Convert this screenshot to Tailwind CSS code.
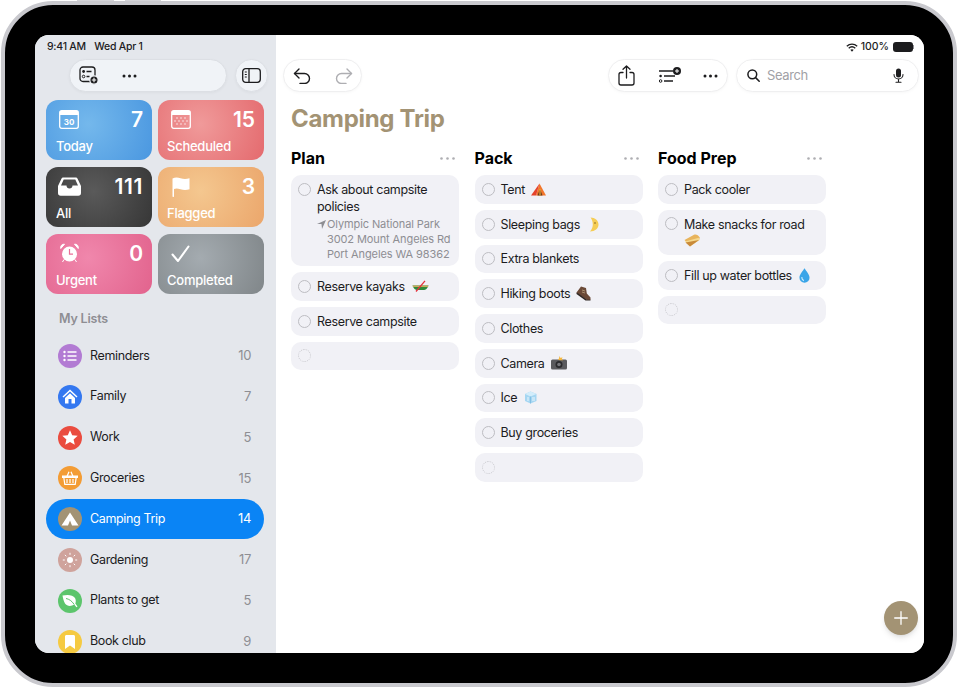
<!DOCTYPE html>
<html lang="en">
<head>
<meta charset="UTF-8">
<title>Reminders - Camping Trip</title>
<script src="https://cdn.jsdelivr.net/npm/@tailwindcss/browser@4"></script>
</head>
<body class="bg-white font-['Inter',sans-serif] text-[#1c1c1e]">
<div class="relative w-[958px] h-[689px] overflow-hidden p-[1px]">
  <!-- hardware buttons -->
  <div class="absolute top-0 left-[77px] w-[37px] h-[3px] bg-[#d4d4d8]"></div>
  <div class="absolute top-0 left-[125px] w-[36px] h-[3px] bg-[#d4d4d8]"></div>

  <div class="relative w-[956px] h-[686px] rounded-[52px] border-[4px] border-[#c9c9ce] bg-black pt-[30px] pl-[30px]">
    <div class="flex w-[889px] h-[618px] rounded-[14px] overflow-hidden bg-white">

      <!-- sidebar -->
      <aside class="w-[241px] h-full shrink-0 bg-[#e4e7ec] overflow-hidden">
        <div class="h-[24px] flex items-center pl-[12px] text-[10.5px] tracking-[-0.25px] font-medium text-[#1c1c1e] gap-[8.500px]">
          <span>9:41 AM</span><span>Wed Apr 1</span>
        </div>
        <div class="flex gap-[8px] ml-[34px] h-[33px]">
          <div class="w-[158px] rounded-full bg-[#f0f3f7] border border-[#dcdfe4] shadow-[0_1px_3px_rgba(0,0,0,0.04)] flex items-center pl-[9px] gap-[23px]">
            <svg width="20" height="19" viewBox="0 0 20 19" fill="none" stroke="#1c1c1e" stroke-width="1.3"><rect x="1" y="1" width="15" height="14.5" rx="3"/><circle cx="4.6" cy="5.5" r="1.4" fill="#1c1c1e" stroke="none"/><circle cx="4.6" cy="10.5" r="1.3" stroke-width="1"/><path d="M7.5 5.5h5M7.5 10.5h3"/><circle cx="15" cy="14" r="4.2" fill="#1c1c1e" stroke="#f0f3f7"/><path d="M15 11.8v4.4M12.8 14h4.4" stroke="#fff" stroke-width="1.1"/></svg>
            <svg width="15" height="4" viewBox="0 0 15 4" fill="#1c1c1e"><circle cx="2" cy="2" r="1.5"/><circle cx="7.5" cy="2" r="1.5"/><circle cx="13" cy="2" r="1.5"/></svg>
          </div>
          <div class="w-[33px] rounded-full bg-[#f0f3f7] border border-[#dcdfe4] shadow-[0_1px_3px_rgba(0,0,0,0.04)] flex items-center justify-center">
            <svg width="19" height="15" viewBox="0 0 19 15" fill="none" stroke="#1c1c1e" stroke-width="1.3"><rect x="0.7" y="0.7" width="17.6" height="13.6" rx="3"/><path d="M7 1v13"/><path d="M2.8 4h2M2.8 6.5h2M2.8 9h2" stroke-width="1.1"/></svg>
          </div>
        </div>

        <div class="grid grid-cols-[106px_106px] gap-x-[6px] gap-y-[7px] ml-[11px] mt-[8px]">
          <div class="h-[60px] rounded-[12px] bg-[radial-gradient(circle_at_40%_40%,#74b8ec,#4a97e0)] text-white flex flex-col justify-between pl-[10px] pr-[9px] pt-[9px] pb-[6px]">
            <div class="flex justify-between items-start h-[22px]">
              <svg class="ml-[3px] mt-[1px]" width="20" height="19" viewBox="0 0 20 19" fill="none"><rect x="0.7" y="0.7" width="18.6" height="17.6" rx="2" stroke="#fff" stroke-width="1.3"/><path d="M1 1h18v4H1z" fill="#fff"/><text x="10" y="15" text-anchor="middle" font-size="8" font-weight="700" fill="#fff">30</text></svg>
              <span class="text-[21px] leading-[22px] font-semibold">7</span>
            </div>
            <span class="text-[13px] leading-[16px] font-medium tracking-[-0.25px]">Today</span>
          </div>
          <div class="h-[60px] rounded-[12px] bg-[radial-gradient(circle_at_40%_40%,#f09a9a,#e46a6e)] text-white flex flex-col justify-between pl-[9px] pr-[9px] pt-[9px] pb-[6px]">
            <div class="flex justify-between items-start h-[22px]">
              <svg class="ml-[4px] mt-[1px]" width="20" height="19" viewBox="0 0 20 19" fill="none"><rect x="0.7" y="0.7" width="18.6" height="17.6" rx="2" stroke="#fff" stroke-width="1.3"/><path d="M1 1h18v4H1z" fill="#fff"/><g fill="#fff"><circle cx="6" cy="8" r=".7"/><circle cx="10" cy="8" r=".7"/><circle cx="14" cy="8" r=".7"/><circle cx="4" cy="11" r=".7"/><circle cx="8" cy="11" r=".7"/><circle cx="12" cy="11" r=".7"/><circle cx="16" cy="11" r=".7"/><circle cx="6" cy="14" r=".7"/><circle cx="10" cy="14" r=".7"/><circle cx="14" cy="14" r=".7"/></g></svg>
              <span class="text-[21px] leading-[22px] font-semibold">15</span>
            </div>
            <span class="text-[13px] leading-[16px] font-medium tracking-[-0.25px]">Scheduled</span>
          </div>
          <div class="h-[60px] rounded-[12px] bg-[radial-gradient(circle_at_45%_40%,#5a5a5a,#363636)] text-white flex flex-col justify-between pl-[10px] pr-[9px] pt-[9px] pb-[6px]">
            <div class="flex justify-between items-start h-[22px]">
              <svg class="ml-[2px] mt-[1px]" width="23" height="19" viewBox="0 0 23 19" fill="#fff"><path d="M5.5 0.5h12c1 0 1.7.4 2.2 1.4L23 9v7c0 1.7-1 2.7-2.7 2.7H2.7C1 18.700 0 17.700 0 16V9l3.300-7.100C3.800.9 4.500.5 5.500.5zM5.700 2.500 3 8.500h5.500c0 1.700 1.300 3 3 3s3-1.300 3-3H20l-2.700-6z"/></svg>
              <span class="text-[21px] leading-[22px] font-semibold tracking-[0.6px]">111</span>
            </div>
            <span class="text-[13px] leading-[16px] font-medium tracking-[-0.25px]">All</span>
          </div>
          <div class="h-[60px] rounded-[12px] bg-[radial-gradient(circle_at_40%_40%,#f4c78f,#eba66b)] text-white flex flex-col justify-between pl-[9px] pr-[9px] pt-[9px] pb-[6px]">
            <div class="flex justify-between items-start h-[22px]">
              <svg class="ml-[5px] mt-[1px]" width="18" height="20" viewBox="0 0 18 20" fill="#fff"><path d="M0.500 1.500C3 .2 5.500.2 8.500 1.200s6 1 9 0v11c-3 1-6 1-9 0s-4.500-1-6.500-.3V19.500a.8.8 0 0 1-1.500 0z"/></svg>
              <span class="text-[21px] leading-[22px] font-semibold">3</span>
            </div>
            <span class="text-[13px] leading-[16px] font-medium tracking-[-0.25px]">Flagged</span>
          </div>
          <div class="h-[60px] rounded-[12px] bg-[radial-gradient(circle_at_40%_40%,#f087ac,#e2638d)] text-white flex flex-col justify-between pl-[10px] pr-[9px] pt-[9px] pb-[6px]">
            <div class="flex justify-between items-start h-[22px]">
              <svg class="ml-[4px]" width="19" height="20" viewBox="0 0 19 20" fill="#fff"><circle cx="9.500" cy="11" r="7.500"/><path d="M0.800 5.500C.2 3 2 .8 4.500 1.200zM18.200 5.500c.6-2.500-1.200-4.700-3.700-4.300zM4 16.500 2.500 19M15 16.500l1.500 2.500" stroke="#fff"/><path d="M9.500 6v5.200h3.500" fill="none" stroke="#e96f98" stroke-width="1.200"/></svg>
              <span class="text-[21px] leading-[22px] font-semibold">0</span>
            </div>
            <span class="text-[13px] leading-[16px] font-medium tracking-[-0.25px]">Urgent</span>
          </div>
          <div class="h-[60px] rounded-[12px] bg-[radial-gradient(circle_at_40%_40%,#a4abb0,#808689)] text-white flex flex-col justify-between pl-[9px] pr-[9px] pt-[9px] pb-[6px]">
            <div class="flex justify-between items-start h-[22px]">
              <svg class="ml-[4px] mt-[2px]" width="19" height="18" viewBox="0 0 19 18" fill="none" stroke="#fff" stroke-width="2.100" stroke-linecap="round" stroke-linejoin="round"><path d="M1.500 9.500 7 16 17.500 1.500"/></svg>
            </div>
            <span class="text-[13px] leading-[16px] font-medium tracking-[-0.25px]">Completed</span>
          </div>
        </div>

        <div class="pl-[24px] pt-[17px] pb-[9px] text-[12.5px] tracking-[-0.2px] leading-[16px] font-semibold text-[#8e8e93]">My Lists</div>

        <div class="ml-[11px] mr-[12px] flex flex-col gap-[0.800px] tracking-[-0.35px]">
          <div class="h-[40px] flex items-center pl-[12px] pr-[13px] rounded-full text-[12.5px]">
            <span class="w-[24px] h-[24px] rounded-full bg-[#b27bd3] flex items-center justify-center">
              <svg width="14" height="12" viewBox="0 0 14 12" fill="#fff"><circle cx="1.500" cy="2" r="1.200"/><circle cx="1.500" cy="6" r="1.200"/><circle cx="1.500" cy="10" r="1.200"/><path d="M4.500 1.200h9v1.600h-9zM4.500 5.200h9v1.600h-9zM4.500 9.200h9v1.600h-9z"/></svg>
            </span>
            <span class="ml-[8px] flex-1">Reminders</span><span class="text-[#8e8e93] text-[13px]">10</span>
          </div>
          <div class="h-[40px] flex items-center pl-[12px] pr-[13px] rounded-full text-[12.5px]">
            <span class="w-[24px] h-[24px] rounded-full bg-[#3478f0] flex items-center justify-center">
              <svg width="16" height="15" viewBox="0 0 16 15" fill="#fff"><path d="M8 0.500 0.500 7.500l1 1.100L8 2.600l6.500 6 1-1.100z"/><path d="M3 9 8 4.300 13 9v5.500H9.500V10h-3v4.500H3z"/></svg>
            </span>
            <span class="ml-[8px] flex-1">Family</span><span class="text-[#8e8e93] text-[13px]">7</span>
          </div>
          <div class="h-[40px] flex items-center pl-[12px] pr-[13px] rounded-full text-[12.5px]">
            <span class="w-[24px] h-[24px] rounded-full bg-[#ea4c3f] flex items-center justify-center">
              <svg width="16" height="15" viewBox="0 0 16 15" fill="#fff"><path d="M8 0.300 10.200 5.300l5.500.5-4.100 3.600 1.200 5.300L8 11.900l-4.800 2.800 1.200-5.300L.3 5.800l5.500-.5z"/></svg>
            </span>
            <span class="ml-[8px] flex-1">Work</span><span class="text-[#8e8e93] text-[13px]">5</span>
          </div>
          <div class="h-[40px] flex items-center pl-[12px] pr-[13px] rounded-full text-[12.5px]">
            <span class="w-[24px] h-[24px] rounded-full bg-[#f39c34] flex items-center justify-center">
              <svg width="16" height="14" viewBox="0 0 16 14" fill="none" stroke="#fff" stroke-width="1.200"><path d="M5 5.500 7 .8M11 5.500 9 .8"/><path d="M.5 5.200h15v1.300h-15z" fill="#fff"/><path d="M1.800 6.500l1 6.800h10.400l1-6.800M5 8v4M8 8v4M11 8v4"/></svg>
            </span>
            <span class="ml-[8px] flex-1">Groceries</span><span class="text-[#8e8e93] text-[13px]">15</span>
          </div>
          <div class="h-[40px] flex items-center pl-[12px] pr-[13px] rounded-full text-[12.5px] bg-[#0a84f5] text-white">
            <span class="w-[24px] h-[24px] rounded-full bg-[#a39374] flex items-center justify-center">
              <svg width="18" height="14" viewBox="0 0 18 14" fill="#fff"><path d="M9 0.500 17.500 13.500H11L9 8.500 7 13.500H.5z"/></svg>
            </span>
            <span class="ml-[8px] flex-1">Camping Trip</span><span class="text-[13px]">14</span>
          </div>
          <div class="h-[40px] flex items-center pl-[12px] pr-[13px] rounded-full text-[12.5px]">
            <span class="w-[24px] h-[24px] rounded-full bg-[#cfa39c] flex items-center justify-center">
              <svg width="16" height="16" viewBox="0 0 16 16" fill="#fff" stroke="#fff"><circle cx="8" cy="8" r="3" stroke="none"/><path d="M8 .8v2M8 13.200v2M.8 8h2M13.200 8h2M2.900 2.900l1.400 1.400M11.700 11.700l1.400 1.400M2.900 13.100l1.400-1.400M11.700 4.300l1.400-1.400" fill="none"/></svg>
            </span>
            <span class="ml-[8px] flex-1">Gardening</span><span class="text-[#8e8e93] text-[13px]">17</span>
          </div>
          <div class="h-[40px] flex items-center pl-[12px] pr-[13px] rounded-full text-[12.5px]">
            <span class="w-[24px] h-[24px] rounded-full bg-[#5cc56c] flex items-center justify-center">
              <svg width="16" height="14" viewBox="0 0 16 14" fill="#fff"><path d="M0.500 1.500C5 .5 11 .5 13 4c1 1.800 1 4 .3 5.500l2.200 3-1 .8-2.300-2.800C9.500 12.500 5 12.500 3 9.500 1.500 7 1 4 .5 1.500z"/><path d="M4 4.500c3 .5 6 2.500 8.200 6" fill="none" stroke="#5cc56c"/></svg>
            </span>
            <span class="ml-[8px] flex-1">Plants to get</span><span class="text-[#8e8e93] text-[13px]">5</span>
          </div>
          <div class="h-[40px] flex items-center pl-[12px] pr-[13px] rounded-full text-[12.5px]">
            <span class="w-[24px] h-[24px] rounded-full bg-[#f5ca42] flex items-center justify-center">
              <svg width="10" height="14" viewBox="0 0 10 14" fill="#fff"><path d="M1.500 0h7c.9 0 1.500.6 1.500 1.500V14L5 10.500 0 14V1.500C0 .6.600 0 1.500 0z"/></svg>
            </span>
            <span class="ml-[8px] flex-1">Book club</span><span class="text-[#8e8e93] text-[13px]">9</span>
          </div>
        </div>
      </aside>

      <!-- main -->
      <main class="relative flex-1 min-w-0 bg-white">
        <div class="h-[24px] flex items-center justify-end pr-[10px] gap-[3px] text-[10.5px] font-medium">
          <svg width="12" height="9" viewBox="0 0 12 9" fill="none" stroke="#1c1c1e" stroke-width="1.300"><path d="M.8 3.200c3-2.800 7.400-2.800 10.400 0M2.700 5.200c2-1.800 4.600-1.800 6.600 0"/><path d="M4.300 6.800 6 8.700l1.700-1.900c-1-.9-2.400-.9-3.400 0z" fill="#1c1c1e" stroke="none"/></svg>
          <span>100%</span>
          <span class="flex items-center ml-[1px]"><span class="w-[20px] h-[10px] rounded-[3px] bg-[#1c1c1e]"></span><span class="w-[1px] h-[4px] bg-[#8e8e93]"></span></span>
        </div>

        <div class="flex items-stretch h-[33px] pl-[7px] pr-[5px]">
          <div class="w-[79px] rounded-full bg-white border border-[#efeff0] shadow-[0_1px_3px_rgba(0,0,0,0.03)] flex items-center pl-[9px] gap-[24px]">
            <svg width="18" height="16" viewBox="0 0 18 16" fill="none" stroke="#1c1c1e" stroke-width="1.400" stroke-linecap="round" stroke-linejoin="round"><path d="M6 1 1.500 5.500 6 10"/><path d="M1.500 5.500h10a5 5 0 0 1 0 10H7"/></svg>
            <svg width="18" height="16" viewBox="0 0 18 16" fill="none" stroke="#aeaeb2" stroke-width="1.400" stroke-linecap="round" stroke-linejoin="round"><path d="M12 1l4.500 4.500L12 10"/><path d="M16.500 5.500h-10a5 5 0 0 0 0 10H11"/></svg>
          </div>
          <div class="ml-auto w-[120px] rounded-full bg-white border border-[#efeff0] shadow-[0_1px_3px_rgba(0,0,0,0.03)] flex items-center pl-[9px] gap-[24px]">
            <svg width="17" height="21" viewBox="0 0 17 21" fill="none" stroke="#1c1c1e" stroke-width="1.300" stroke-linecap="round" stroke-linejoin="round"><path d="M5 7.500H3a2 2 0 0 0-2 2V18a2 2 0 0 0 2 2h11a2 2 0 0 0 2-2V9.500a2 2 0 0 0-2-2h-2"/><path d="M8.500 13V1M5 4.300 8.500 1 12 4.300"/></svg>
            <svg width="23" height="17" viewBox="0 0 23 17" fill="none" stroke="#1c1c1e" stroke-width="1.500"><path d="M0 4h14"/><circle cx="1.600" cy="9" r="1.300" fill="#1c1c1e" stroke="none"/><circle cx="1.600" cy="14" r="1.300" stroke-width="1"/><path d="M5 9h11M5 14h9"/><circle cx="18" cy="4" r="4" fill="#1c1c1e" stroke="none"/><path d="M18 2v4M16 4h4" stroke="#fff" stroke-width="1"/></svg>
            <svg class="-ml-[3px]" width="15" height="4" viewBox="0 0 15 4" fill="#1c1c1e"><circle cx="2" cy="2" r="1.500"/><circle cx="7.500" cy="2" r="1.500"/><circle cx="13" cy="2" r="1.500"/></svg>
          </div>
          <div class="ml-[8px] w-[183px] rounded-full bg-white border border-[#efeff0] shadow-[0_1px_3px_rgba(0,0,0,0.03)] flex items-center pl-[10px] pr-[14px]">
            <svg width="13" height="13" viewBox="0 0 13 13" fill="none" stroke="#1c1c1e" stroke-width="1.500" stroke-linecap="round"><circle cx="5.300" cy="5.300" r="4.400"/><path d="M8.600 8.600 12.200 12.200"/></svg>
            <span class="ml-[7px] flex-1 text-[13px] tracking-[-0.4px] text-[#a1a1a6]">Search</span>
            <svg width="11" height="15" viewBox="0 0 11 15" fill="none" stroke="#1c1c1e" stroke-width="1.100" stroke-linecap="round"><rect x="3" y="0.500" width="5" height="9" rx="2.500" fill="#1c1c1e" stroke="none"/><path d="M1 6.500a4.500 4.500 0 0 0 9 0M5.500 11v3M3 14.300h5"/></svg>
          </div>
        </div>

        <h1 class="mt-[9px] h-[35px] pl-[15px] text-[24px] tracking-[-0.3px] leading-[36px] font-bold text-[#a39374]">Camping Trip</h1>

        <div class="mt-[12px] pl-[15px] flex items-start gap-[15.500px]">

          <section class="w-[168px]">
            <header class="h-[20px] mb-[7px] flex items-center justify-between pr-[4px]">
              <h2 class="text-[16px] font-bold text-black">Plan</h2>
              <svg width="15" height="3" viewBox="0 0 15 3" fill="#aeaeb2"><circle cx="1.500" cy="1.500" r="1.300"/><circle cx="7.500" cy="1.500" r="1.300"/><circle cx="13.500" cy="1.500" r="1.300"/></svg>
            </header>
            <div class="flex flex-col gap-[6px] text-[12.5px] tracking-[-0.35px] leading-[17px]">
              <div class="rounded-[10px] bg-[#f1f1f6] flex pl-[7px] pt-[6px] pb-[4px]">
                <span class="w-[13px] h-[13px] mt-[1.500px] shrink-0 rounded-full border border-[#bdbdc2]"></span>
                <div class="ml-[6px]">
                  <div>Ask about campsite policies</div>
                  <div class="mt-[2px] relative pl-[10px] text-[11px] tracking-[-0.1px] leading-[15px] text-[#8e8e93] whitespace-nowrap">
                    <svg class="absolute left-0 top-[3px]" width="9" height="9" viewBox="0 0 9 9" fill="#8e8e93"><path d="M9 0 0 4h4.500L5 9z"/></svg>
                    <div>Olympic National Park</div><div>3002 Mount Angeles Rd</div><div>Port Angeles WA 98362</div>
                  </div>
                </div>
              </div>
              <div class="h-[28.750px] rounded-[10px] bg-[#f1f1f6] flex items-center pl-[7px] gap-[6px]">
                <span class="w-[13px] h-[13px] shrink-0 rounded-full border border-[#bdbdc2]"></span>
                <span>Reserve kayaks</span>
                <svg class="ml-[1px]" width="17" height="12" viewBox="0 0 16 12" fill="none"><path d="M0 5.500h16c-1 3-3 4.500-4.500 4.500h-7C3 10 1 8.500 0 5.500z" fill="#2f8a3a"/><path d="M0 5.500h16l-.6 1.500H.6z" fill="#c9a85c"/><path d="M3.500 11.500 12.500 .8" stroke="#e5303a" stroke-width="1.300"/></svg>
              </div>
              <div class="h-[28.750px] rounded-[10px] bg-[#f1f1f6] flex items-center pl-[7px] gap-[6px]">
                <span class="w-[13px] h-[13px] shrink-0 rounded-full border border-[#bdbdc2]"></span>
                <span>Reserve campsite</span>
              </div>
              <div class="h-[28.750px] rounded-[10px] bg-[#f1f1f6] flex items-center pl-[7px]">
                <span class="w-[13px] h-[13px] shrink-0 rounded-full border border-dotted border-[#c7c7cc]"></span>
              </div>
            </div>
          </section>

          <section class="w-[168px]">
            <header class="h-[20px] mb-[7px] flex items-center justify-between pr-[4px]">
              <h2 class="text-[16px] font-bold text-black">Pack</h2>
              <svg width="15" height="3" viewBox="0 0 15 3" fill="#aeaeb2"><circle cx="1.500" cy="1.500" r="1.300"/><circle cx="7.500" cy="1.500" r="1.300"/><circle cx="13.500" cy="1.500" r="1.300"/></svg>
            </header>
            <div class="flex flex-col gap-[6px] text-[12.5px] tracking-[-0.35px] leading-[17px]">
              <div class="h-[28.750px] rounded-[10px] bg-[#f1f1f6] flex items-center pl-[7px] gap-[6px]">
                <span class="w-[13px] h-[13px] shrink-0 rounded-full border border-[#bdbdc2]"></span>
                <span>Tent</span>
                <svg width="15" height="13" viewBox="0 0 15 13"><path d="M8.500.5 15 12.500H5z" fill="#f2762b"/><path d="M8.500.5 0 12.500h5z" fill="#e5432b"/><path d="M9 6l-2.500 6.500h5z" fill="#6b3a1c"/><path d="M9 6v6.500" stroke="#f5c542"/></svg>
              </div>
              <div class="h-[28.750px] rounded-[10px] bg-[#f1f1f6] flex items-center pl-[7px] gap-[6px]">
                <span class="w-[13px] h-[13px] shrink-0 rounded-full border border-[#bdbdc2]"></span>
                <span>Sleeping bags</span>
                <svg class="ml-[3px]" width="10" height="15" viewBox="0 0 10 15"><path d="M1.500.5c4.500 0 8 3 8 7s-3.500 7-8.500 7C3 12 3.800 9.800 3.800 7.500 3.800 5 3 2.500 1.500.5z" fill="#f5cd55"/><circle cx="6" cy="6" r=".7" fill="#6b4a10"/></svg>
              </div>
              <div class="h-[28.750px] rounded-[10px] bg-[#f1f1f6] flex items-center pl-[7px] gap-[6px]">
                <span class="w-[13px] h-[13px] shrink-0 rounded-full border border-[#bdbdc2]"></span>
                <span>Extra blankets</span>
              </div>
              <div class="h-[28.750px] rounded-[10px] bg-[#f1f1f6] flex items-center pl-[7px] gap-[6px]">
                <span class="w-[13px] h-[13px] shrink-0 rounded-full border border-[#bdbdc2]"></span>
                <span>Hiking boots</span>
                <svg width="15" height="15" viewBox="0 0 15 15"><path d="M5 .5l5 1.500.8 5.500 3.700 4v2.500H11L3 8.500.5 6.500z" fill="#6b4a38"/><path d="M11 13.800 2.500 7.500.5 6.500v1.500l9 6.500h5v-.700z" fill="#2f2723"/><path d="M6 4l3 1M6 6l3 1" stroke="#c9b08a" stroke-width=".7"/></svg>
              </div>
              <div class="h-[28.750px] rounded-[10px] bg-[#f1f1f6] flex items-center pl-[7px] gap-[6px]">
                <span class="w-[13px] h-[13px] shrink-0 rounded-full border border-[#bdbdc2]"></span>
                <span>Clothes</span>
              </div>
              <div class="h-[28.750px] rounded-[10px] bg-[#f1f1f6] flex items-center pl-[7px] gap-[6px]">
                <span class="w-[13px] h-[13px] shrink-0 rounded-full border border-[#bdbdc2]"></span>
                <span>Camera</span>
                <svg width="16" height="14" viewBox="0 0 16 14"><rect x="0" y="3.500" width="16" height="10" rx="1.500" fill="#5a5a5e"/><circle cx="8" cy="8.500" r="3.500" fill="#2a2a2d"/><circle cx="8" cy="8.500" r="1.800" fill="#77777c"/><path d="M8.500 0l1 2 2-.7-.7 2 1.500 1H9L7 3.800l1-1.300z" fill="#f6b73c"/></svg>
              </div>
              <div class="h-[28.750px] rounded-[10px] bg-[#f1f1f6] flex items-center pl-[7px] gap-[6px]">
                <span class="w-[13px] h-[13px] shrink-0 rounded-full border border-[#bdbdc2]"></span>
                <span>Ice</span>
                <svg class="ml-[1px]" width="13" height="13" viewBox="0 0 13 13"><path d="M1 3l5.500-2.500L12.500 3v7L6.500 12.500 1 10z" fill="#a5d6f2"/><path d="M1 3l5.500 2.500L12.500 3 6.500.5z" fill="#d3edfb"/><path d="M6.500 5.500v7" stroke="#74b5de" stroke-width=".7"/><path d="M3 7h2M8 7h3M3 9h2M8 9h3" stroke="#fff" stroke-width=".8"/></svg>
              </div>
              <div class="h-[28.750px] rounded-[10px] bg-[#f1f1f6] flex items-center pl-[7px] gap-[6px]">
                <span class="w-[13px] h-[13px] shrink-0 rounded-full border border-[#bdbdc2]"></span>
                <span>Buy groceries</span>
              </div>
              <div class="h-[28.750px] rounded-[10px] bg-[#f1f1f6] flex items-center pl-[7px]">
                <span class="w-[13px] h-[13px] shrink-0 rounded-full border border-dotted border-[#c7c7cc]"></span>
              </div>
            </div>
          </section>

          <section class="w-[168px]">
            <header class="h-[20px] mb-[7px] flex items-center justify-between pr-[4px]">
              <h2 class="text-[16px] font-bold text-black">Food Prep</h2>
              <svg width="15" height="3" viewBox="0 0 15 3" fill="#aeaeb2"><circle cx="1.500" cy="1.500" r="1.300"/><circle cx="7.500" cy="1.500" r="1.300"/><circle cx="13.500" cy="1.500" r="1.300"/></svg>
            </header>
            <div class="flex flex-col gap-[6px] text-[12.5px] tracking-[-0.35px] leading-[17px]">
              <div class="h-[28.750px] rounded-[10px] bg-[#f1f1f6] flex items-center pl-[7px] gap-[6px]">
                <span class="w-[13px] h-[13px] shrink-0 rounded-full border border-[#bdbdc2]"></span>
                <span>Pack cooler</span>
              </div>
              <div class="h-[45px] rounded-[10px] bg-[#f1f1f6] flex pl-[7px] pt-[6px]">
                <span class="w-[13px] h-[13px] mt-[1.500px] shrink-0 rounded-full border border-[#bdbdc2]"></span>
                <div class="ml-[6px]">
                  <div>Make snacks for road</div>
                  <svg class="mt-[1px]" width="16" height="13" viewBox="0 0 16 13"><path d="M.5 6 10 .8c2-.8 4.500.5 5.500 2.500v2L6 11.800z" fill="#e8b45c"/><path d="M1 7.500 14.800 3.800 15.500 6 6 12.500z" fill="#f6d98c"/><path d="M1.500 8.500 15 6 6 12.500z" fill="#c98a3a"/></svg>
                </div>
              </div>
              <div class="h-[28.750px] rounded-[10px] bg-[#f1f1f6] flex items-center pl-[7px] gap-[6px]">
                <span class="w-[13px] h-[13px] shrink-0 rounded-full border border-[#bdbdc2]"></span>
                <span>Fill up water bottles</span>
                <svg class="ml-[1px]" width="11" height="15" viewBox="0 0 10 14"><path d="M5 .3C6.500 3 9.700 6 9.700 9A4.700 4.700 0 0 1 .3 9C.3 6 3.500 3 5 .3z" fill="#3aa5e8"/><path d="M2.500 8.500c0 1.800.8 3 2 3.300" fill="none" stroke="#c9ecff" stroke-width="1"/></svg>
              </div>
              <div class="h-[28.750px] rounded-[10px] bg-[#f1f1f6] flex items-center pl-[7px]">
                <span class="w-[13px] h-[13px] shrink-0 rounded-full border border-dotted border-[#c7c7cc]"></span>
              </div>
            </div>
          </section>
        </div>

        <!-- floating add button -->
        <div class="absolute right-[6px] bottom-[18px] w-[34px] h-[34px] rounded-full bg-[#a39374] shadow-md flex items-center justify-center">
          <svg width="14" height="14" viewBox="0 0 14 14" stroke="#fff" stroke-width="1.300" stroke-linecap="round"><path d="M7 .7v12.600M.7 7h12.600"/></svg>
        </div>
      </main>
    </div>
  </div>
</div>
</body>
</html>
